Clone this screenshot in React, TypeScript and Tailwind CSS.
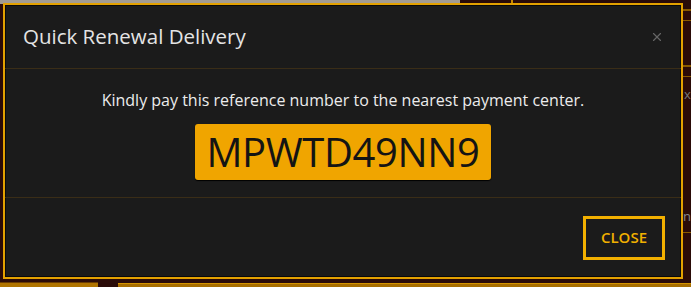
import { X } from "lucide-react";

// Reference number dialog shown over the renewal page.
export default function App() {
  return (
    <div className="relative w-[691px] h-[287px] overflow-hidden bg-[#2a0b08] p-[3px] font-['Open_Sans',sans-serif]">
      {/* page behind the overlay */}
      <div className="absolute inset-x-0 top-0 flex h-[4px]">
        <div className="w-[460px] bg-[#a39c92]" />
        <div className="ml-[51px] w-[2px] bg-[#c88a00]" />
      </div>
      <div className="absolute right-0 inset-y-0 w-[8px] flex flex-col text-[13px] leading-none text-[#777]">
        <div className="mt-[9px] h-[2px] bg-[#8a5a00]" />
        <div className="mt-[9px] h-[1px] bg-[#8a5a00]" />
        <div className="mt-[44px] h-[2px] bg-[#8a5a00]" />
        <div className="mt-[9px] h-[1px] bg-[#8a5a00]" />
        <div className="mt-[11px] pl-[1px]">x</div>
        <div className="mt-[109px] text-[#888]">n</div>
        <div className="mt-[9px] h-[1px] bg-[#8a5a00]" />
      </div>
      <div className="absolute inset-x-0 bottom-0 flex h-[5px] items-end">
        <div className="w-[98px] h-[5px] bg-[#b07400] border-t border-[#6b3c00]" />
        <div className="ml-[20px] flex-1 h-[4px] bg-[#a86e00] border-t border-[#d49400]" />
      </div>

      {/* dialog */}
      <div className="relative z-10 w-[680px] h-[276px] border-2 border-[#e4a100] bg-[#1b1b1b] shadow-[inset_0_0_0_1px_#0a0a0a] flex flex-col">
        <div className="h-[64px] flex items-center justify-between pl-[18px] pr-[17px] border-b border-[#3a2d17]">
          <h2 className="text-[20.5px] text-[#e4e4e4] leading-none">Quick Renewal Delivery</h2>
          <X className="w-[14px] h-[14px] text-[#666]" strokeWidth={2} />
        </div>

        <div className="h-[129px] flex flex-col items-center pt-[20px] border-b border-[#3a2d17]">
          <p className="text-[16px] leading-[22px] text-[#ececec]">
            Kindly pay this reference number to the nearest payment center.
          </p>
          <div className="mt-[13px] w-[296px] h-[56px] rounded-[3px] bg-[#f0a500] shadow-[0_1px_1px_#000] flex items-center justify-center">
            <span className="text-[40px] leading-none text-[#141414] tracking-[-0.4px]">MPWTD49NN9</span>
          </div>
        </div>

        <div className="flex-1 flex items-center justify-end pr-[16px]">
          <button className="w-[82px] h-[44px] border-[3px] border-[#f3b000] text-[15px] font-semibold text-[#f0b000] bg-[#1b1b1b]">
            CLOSE
          </button>
        </div>
      </div>
    </div>
  );
}
